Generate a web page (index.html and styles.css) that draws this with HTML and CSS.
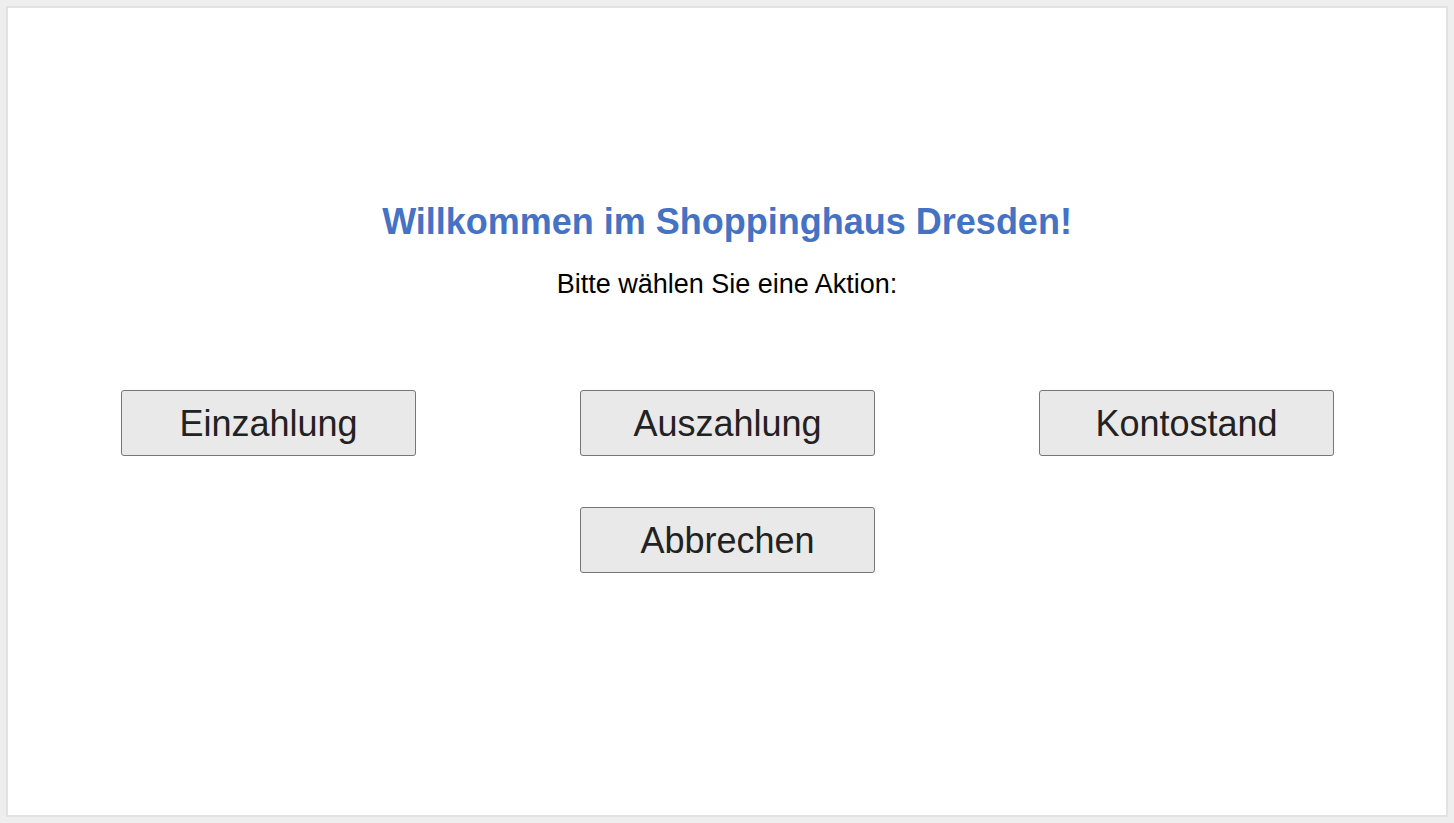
FILE: index.html
```html
<!DOCTYPE html>
<html lang="de">
<head>
<meta charset="utf-8">
<title>Shoppinghaus Dresden</title>
<link rel="stylesheet" href="styles.css">
</head>
<body>
<main class="panel">
  <h1 class="title">Willkommen im Shoppinghaus Dresden!</h1>
  <p class="subtitle">Bitte wählen Sie eine Aktion:</p>
  <div class="actions">
    <div class="row">
      <button class="btn">Einzahlung</button>
      <button class="btn">Auszahlung</button>
      <button class="btn">Kontostand</button>
    </div>
    <div class="row">
      <button class="btn">Abbrechen</button>
    </div>
  </div>
</main>
</body>
</html>
```
FILE: styles.css
```css
html, body {
  margin: 0;
  padding: 0;
}
body {
  background: #eeeeee;
  padding: 6px 6px 6px 6px;
  height: 100vh;
  box-sizing: border-box;
  font-family: "Liberation Sans", Arial, sans-serif;
}
.panel {
  height: 100%;
  box-sizing: border-box;
  background: #ffffff;
  border: 2px solid #e2e2e2;
  display: flex;
  flex-direction: column;
  align-items: center;
  padding-top: 193px;
}
.title {
  margin: 0;
  font-size: 36px;
  font-weight: bold;
  color: #4472c4;
  line-height: 42px;
}
.subtitle {
  margin: 26px 0 0 0;
  font-size: 27px;
  color: #000;
  line-height: 30px;
}
.actions {
  margin-top: 91px;
  display: flex;
  flex-direction: column;
  gap: 51px;
  align-items: center;
  padding-left: 1px;
}
.row {
  display: flex;
  gap: 164px;
  justify-content: center;
}
.btn {
  width: 295px;
  height: 66px;
  box-sizing: border-box;
  background: #e9e9e9;
  border: 1px solid #767676;
  border-radius: 3px;
  font-family: "Liberation Sans", Arial, sans-serif;
  font-size: 36px;
  color: #222;
  padding: 2px 0 0 0;
}
```
